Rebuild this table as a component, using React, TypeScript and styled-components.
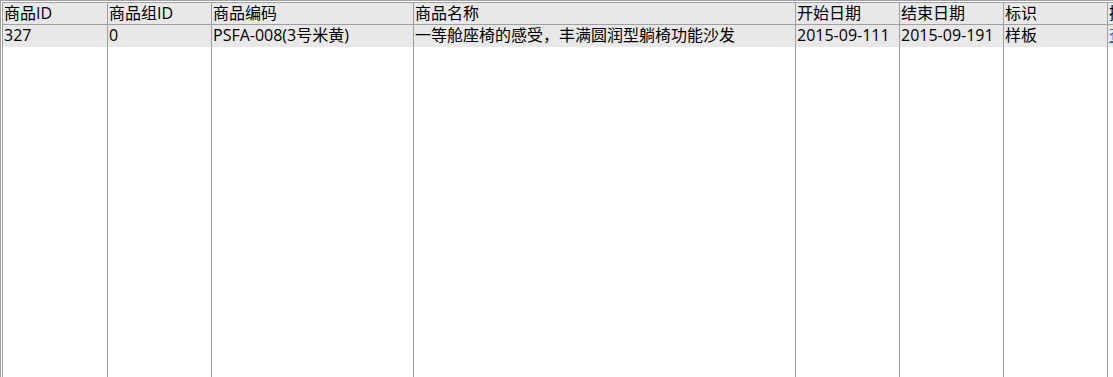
import React from "react";
import styled, { createGlobalStyle } from "styled-components";

const GlobalStyle = createGlobalStyle`
  html, body {
    margin: 0;
    padding: 0;
    background: #ffffff;
    overflow: hidden;
  }
  body {
    font-family: "Open Sans", "Noto Sans CJK SC", sans-serif;
  }
`;

const Frame = styled.div`
  box-sizing: border-box;
  height: 377px;
  width: 1113px;
  overflow: hidden;
  border-top: 1px solid #a0a0a0;
  border-left: 1px solid #a0a0a0;
  padding: 1px 0 0 1px;
`;

const Grid = styled.div`
  display: grid;
  grid-template-columns: 106px 104px 202px 382px 104px 104px 104px 104px;
  grid-template-rows: 23px 22px 1fr;
  height: 100%;
  width: max-content;
`;

const Cell = styled.div<{ $first?: boolean; $kind: "head" | "data" | "fill" }>`
  box-sizing: border-box;
  border-right: 1px solid #a0a0a0;
  border-left: ${(p) => (p.$first ? "1px solid #a0a0a0" : "none")};
  border-top: ${(p) => (p.$kind === "head" ? "1px solid #a0a0a0" : "none")};
  border-bottom: ${(p) => (p.$kind === "head" ? "1px solid #a0a0a0" : "none")};
  background: ${(p) => (p.$kind === "fill" ? "#ffffff" : "#e8e8e8")};
  padding: 0 1px;
  font-size: 16px;
  line-height: 21px;
  color: #000000;
  white-space: nowrap;
  overflow: hidden;
`;

const Link = styled.span`
  color: #2a62d6;
  text-decoration: underline;
`;

const headers = ["商品ID", "商品组ID", "商品编码", "商品名称", "开始日期", "结束日期", "标识", "操作"];
const row = [
  "327",
  "0",
  "PSFA-008(3号米黄)",
  "一等舱座椅的感受，丰满圆润型躺椅功能沙发",
  "2015-09-111",
  "2015-09-191",
  "样板",
];

export default function App() {
  return (
    <>
      <GlobalStyle />
      <Frame>
        <Grid>
          {headers.map((h, i) => (
            <Cell key={"h" + i} $kind="head" $first={i === 0}>
              {h}
            </Cell>
          ))}
          {row.map((v, i) => (
            <Cell key={"d" + i} $kind="data" $first={i === 0}>
              {v}
            </Cell>
          ))}
          <Cell $kind="data">
            <Link>查看</Link>
          </Cell>
          {headers.map((_, i) => (
            <Cell key={"f" + i} $kind="fill" $first={i === 0} />
          ))}
        </Grid>
      </Frame>
    </>
  );
}
